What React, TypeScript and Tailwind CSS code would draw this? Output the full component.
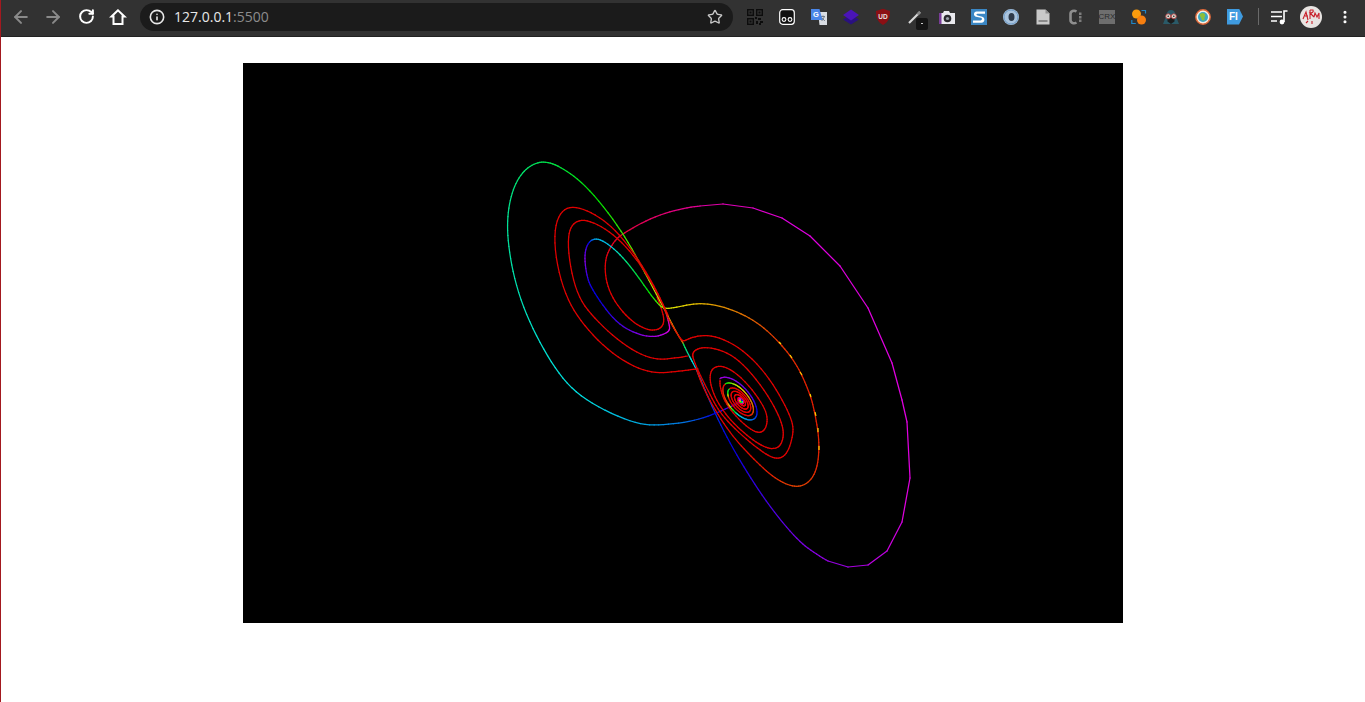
import { ArrowLeft, ArrowRight, RotateCw, Info, Star, MoreVertical } from "lucide-react";

type P = [number, number, number];

// catmull-rom so the traced points come out as a smooth line
function smooth(pts: P[], steps = 6): P[] {
  const out: P[] = [];
  for (let i = 0; i < pts.length - 1; i++) {
    const a = pts[Math.max(i - 1, 0)];
    const b = pts[i];
    const c = pts[i + 1];
    const d = pts[Math.min(i + 2, pts.length - 1)];
    for (let s = 0; s < steps; s++) {
      const t = s / steps;
      const f = (k: number) =>
        0.5 * (2 * b[k] + (c[k] - a[k]) * t + (2 * a[k] - 5 * b[k] + 4 * c[k] - d[k]) * t * t + (3 * b[k] - a[k] - 3 * c[k] + d[k]) * t * t * t);
      const h = b[2] + (c[2] - b[2]) * t;
      out.push([f(0), f(1), h]);
    }
  }
  out.push(pts[pts.length - 1]);
  // moving average to take the kinks out of the hand-read points
  return out.map((p, i) => {
    const w = Math.min(4, i, out.length - 1 - i);
    let x = 0;
    let y = 0;
    for (let k = -w; k <= w; k++) {
      x += out[i + k][0];
      y += out[i + k][1];
    }
    return [x / (2 * w + 1), y / (2 * w + 1), p[2]] as P;
  });
}

// spiral of tilted ellipses around the right-hand wing's centre
function ring(a0: number, a1: number, turns: number, c0: [number, number], c1: [number, number], hue: (f: number) => number): P[] {
  const out: P[] = [];
  const n = Math.round(72 * turns);
  const th = (50 * Math.PI) / 180;
  for (let i = 0; i <= n; i++) {
    const f = i / n;
    const t = Math.PI + f * turns * 2 * Math.PI;
    const a = a0 + (a1 - a0) * f;
    const b = a * 0.48;
    const cx = c0[0] + (c1[0] - c0[0]) * f;
    const cy = c0[1] + (c1[1] - c0[1]) * f;
    const x = cx + a * Math.cos(t) * Math.cos(th) - b * Math.sin(t) * Math.sin(th);
    const y = cy + a * Math.cos(t) * Math.sin(th) + b * Math.sin(t) * Math.cos(th);
    out.push([x, y, hue(f)]);
  }
  return out;
}

function stops(list: [number, number][]) {
  return (f: number) => {
    for (let i = 0; i < list.length - 1; i++) {
      if (f <= list[i + 1][0]) {
        const k = (f - list[i][0]) / (list[i + 1][0] - list[i][0]);
        return list[i][1] + (list[i + 1][1] - list[i][1]) * k;
      }
    }
    return list[list.length - 1][1];
  };
}

const innerToOuter: P[] = [
  [657, 297, 360], [663, 313, 360], [664, 325, 360], [655, 331, 360], [640, 327, 360], [623, 313, 360], [608, 290, 360], [605, 268, 360],
  [607, 253, 355], [617, 238, 350], [625, 233, 345], [650, 218, 335], [680, 209, 325], [700, 206, 320],
];
const outerArc: P[] = [
  [700, 206, 320], [723, 204, 315], [753, 208, 310], [782, 218, 305], [810, 236, 300], [840, 266, 300], [868, 308, 300], [892, 363, 300], [902, 400, 300],
  [907, 422, 300], [910, 478, 300], [902, 522, 300], [887, 551, 295], [868, 565, 290], [848, 567, 285], [828, 561, 280],
];
const falling: P[] = [
  [828, 561, 280], [810, 550, 275], [795, 537, 270], [770, 507, 260], [747, 472, 250], [727, 438, 240], [709, 400, 225], [697, 370, 200], [690, 358, 175], [683, 343, 140],
];
const greenLoop: P[] = [
  [683, 343, 30], [675, 330, 35], [665, 310, 58], [640, 264, 85], [623, 233, 105], [593, 193, 120], [570, 173, 130], [552, 163, 138], [540, 162, 142],
  [528, 167, 146], [517, 180, 150], [510, 200, 155], [507, 225, 160], [510, 257, 163], [520, 300, 168], [540, 343, 175], [563, 380, 178], [590, 403, 182],
  [633, 423, 192], [657, 425, 200], [690, 422, 210], [717, 413, 240], [740, 402, 280],
];
const blueLoop: P[] = [
  [665, 310, 360], [670, 327, 305], [668, 332, 295], [653, 338, 285], [633, 332, 270], [613, 320, 255], [593, 290, 240], [588, 280, 250], [584, 257, 275],
  [588, 243, 250], [596, 238, 195], [610, 245, 190], [630, 265, 150], [647, 290, 125], [660, 306, 100], [667, 309, 65], [687, 305, 55], [707, 303, 45],
  [733, 310, 35], [757, 322, 25], [777, 340, 15], [792, 358, 12], [802, 375, 10], [810, 395, 8], [813, 405, 8], [818, 430, 8], [819, 448, 10], [817, 470, 10],
  [808, 483, 15], [797, 487, 18], [783, 483, 15], [767, 472, 8], [747, 452, 3], [730, 433, 0], [712, 405, 0], [700, 380, 0], [697, 370, 0],
];
const redOuter: P[] = [
  [698, 369, 0], [687, 370, 0], [663, 373, 0], [640, 370, 0], [607, 350, 0], [580, 320, 0], [563, 290, 0], [553, 240, 0], [560, 212, 0],
  [575, 206, 0], [600, 217, 0], [623, 238, 0], [647, 273, 0], [660, 298, 0], [668, 315, 0],
];
const redInner: P[] = [
  [688, 356, 0], [667, 359, 0], [647, 358, 0], [617, 340, 0], [590, 313, 0], [575, 290, 0], [567, 243, 0], [572, 225, 0], [583, 219, 0],
  [605, 228, 0], [630, 250, 0], [650, 280, 0], [662, 302, 0], [668, 318, 10], [675, 330, 10], [682, 341, 0], [686, 340, 0],
  [700, 335, 0], [723, 338, 0], [753, 358, 0], [777, 390, 0], [792, 420, 0], [793, 433, 0], [788, 453, 0], [778, 459, 0], [767, 455, 0], [747, 440, 0],
  [723, 417, 0], [713, 400, 0], [700, 375, 0], [693, 358, 0], [693, 353, 0], [700, 347, 0], [723, 350, 0], [747, 367, 0], [773, 403, 0], [783, 427, 0],
  [783, 437, 0], [780, 447, 0], [770, 449, 0], [757, 443, 0], [737, 427, 0], [720, 407, 0], [711, 387, 0], [710, 373, 0], [717, 365, 0], [737, 372, 0],
  [760, 400, 0], [768, 417, 0], [765, 430, 0], [758, 433, 0], [747, 427, 0], [730, 410, 0], [721, 393, 0], [720, 380, 0],
];

const specks: [number, number, number, number][] = [
  [779, 342, 781, 344], [790, 355, 792, 358], [800, 372, 802, 375], [810, 394, 811, 397], [815, 412, 816, 416], [818, 428, 818, 432], [819, 446, 819, 450],
];

const curves: P[][] = [
  smooth(innerToOuter),
  outerArc,
  smooth(falling),
  smooth(greenLoop),
  smooth(blueLoop),
  smooth(redOuter),
  smooth(redInner),
  ring(28, 21, 1, [738, 400], [739, 400], stops([[0, 285], [0.3, 262], [0.55, 210], [0.68, 185], [0.8, 20], [1, 0]])),
  ring(21, 16, 1, [739, 400], [740, 401], stops([[0, 130], [0.12, 80], [0.2, 55], [0.4, 25], [0.6, 0], [0.85, 0], [0.93, 130], [1, 130]])),
  ring(16, 4, 3, [740, 401], [741, 401], () => 0),
  ring(4, 1, 2, [741, 401], [741, 401], stops([[0, 340], [0.5, 320], [1, 40]])),
];

function Attractor() {
  return (
    <svg viewBox="243 63 880 560" className="h-full w-full">
      {curves.map((c, i) =>
        c.slice(1).map((p, j) => (
          <line
            key={`${i}-${j}`}
            x1={c[j][0]}
            y1={c[j][1]}
            x2={p[0]}
            y2={p[1]}
            stroke={`hsl(${p[2]}, 100%, 44%)`}
            strokeWidth={1.25}
            strokeLinecap="round"
          />
        ))
      )}
      {specks.map((s, i) => (
        <line key={i} x1={s[0]} y1={s[1]} x2={s[2]} y2={s[3]} stroke="#ffd000" strokeWidth={1.2} />
      ))}
    </svg>
  );
}

const mono = { fontFamily: "Liberation Sans, sans-serif" };

function ExtensionIcons() {
  return [
    /* qr code */
    <svg key="qr" width="18" height="18" viewBox="0 0 18 18">
      <rect x="1" y="1" width="16" height="16" fill="#333333" />
      <g fill="none" stroke="#0c0c0c" strokeWidth="1.4">
        <rect x="1.7" y="1.7" width="5.6" height="5.6" />
        <rect x="10.7" y="1.7" width="5.6" height="5.6" />
        <rect x="1.7" y="10.7" width="5.6" height="5.6" />
      </g>
      <path d="M3.5 3.5h2v2h-2zM12.5 3.500h2v2h-2zM3.500 12.500h2v2h-2zM9 9h2v2H9zM12 10h3v2h-3zM10 13h2v3h-2zM14 13h3v2h-3zM13 15h2v2h-2z" fill="#0c0c0c" />
    </svg>,
    /* tampermonkey */
    <svg key="tm" width="16" height="16" viewBox="0 0 16 16">
      <rect x="0.7" y="0.7" width="14.600" height="14.600" rx="3" fill="#111" stroke="#fff" strokeWidth="1.2" />
      <circle cx="5" cy="10.500" r="1.900" fill="none" stroke="#fff" strokeWidth="1.100" />
      <circle cx="11" cy="10.500" r="1.900" fill="none" stroke="#fff" strokeWidth="1.100" />
    </svg>,
    /* translate */
    <svg key="tr" width="18" height="18" viewBox="0 0 18 18">
      <path d="M8 4h9v13H9.500z" fill="#d9dde3" />
      <path d="M11 8.500h4M13 7.500v1M11.700 13l2.600-4M11.800 9.600l3 3.400" stroke="#6b7480" strokeWidth="0.900" fill="none" />
      <path d="M1 1h8.500l3 11H1z" fill="#4a86e8" />
      <text x="2.900" y="9.200" fontSize="7.500" fontWeight="700" fill="#fff" style={mono}>G</text>
    </svg>,
    /* layers */
    <svg key="la" width="16" height="16" viewBox="0 0 16 16">
      <path d="M8 5.500l8 5-8 5-8-5z" fill="#2a1180" />
      <path d="M8 .5l8 5.500-8 5.500L0 6z" fill="#4a14b8" />
    </svg>,
    /* ublock */
    <svg key="ub" width="16" height="18" viewBox="0 0 16 18">
      <path d="M8 .8l7 2.200c0 6.500-1.500 11-7 14C2.500 14 1 9.500 1 3z" fill="#8b0f14" />
      <text x="3.300" y="10.500" fontSize="6.500" fontWeight="700" fill="#e8e0e0" style={mono}>UD</text>
    </svg>,
    /* pen with badge */
    <div key="pen" className="relative h-4 w-4">
      <svg width="16" height="16" viewBox="0 0 16 16">
        <path d="M2 14L13 3" stroke="#d8d8d8" strokeWidth="2.200" />
        <path d="M10.500 5.500L13 3" stroke="#8a8a8a" strokeWidth="2.600" />
      </svg>
      <div className="absolute left-[9px] top-[9px] flex h-3 w-3 items-center justify-center rounded-[2px] bg-[#151515]">
        <div className="h-px w-[2px] bg-[#cccccc]" />
      </div>
    </div>,
    /* camera */
    <svg key="cam" width="16" height="16" viewBox="0 0 16 16">
      <path d="M0 4h4l1-2h5l1 2h5v11H0z" fill="#e9e9ee" />
      <rect x="0" y="4" width="2.500" height="11" fill="#7a3d98" />
      <circle cx="8.500" cy="9.500" r="3.800" fill="#2a2a2e" />
      <circle cx="8.500" cy="9.500" r="1.600" fill="#9aa0a8" />
    </svg>,
    /* s logo */
    <svg key="s" width="16" height="16" viewBox="0 0 16 16">
      <rect width="16" height="16" fill="#3b87c4" />
      <path d="M14 2.500H5.500C2.500 2.500 2 6.800 5 7.800l5 1c1.500.4 1.200 2.600-.5 2.600H2v2.400h8.500c3.500 0 4-5 .7-6L6.500 6.600C5 6.200 5.200 4.800 6.500 4.800H14z" fill="#fff" />
    </svg>,
    /* ring */
    <svg key="ring" width="16" height="16" viewBox="0 0 16 16">
      <circle cx="8" cy="8" r="8" fill="#a9c3dd" />
      <circle cx="8" cy="8" r="7" fill="none" stroke="#6f9bc7" strokeWidth="1" />
      <ellipse cx="8.500" cy="8" rx="3" ry="4" fill="#2e3a4a" />
    </svg>,
    /* page */
    <svg key="page" width="14" height="16" viewBox="0 0 14 16">
      <path d="M0.500 0.500h9l4 4v11h-13z" fill="#c9c9c9" />
      <path d="M9.500 0.500v4h4z" fill="#8f8f8f" />
      <rect x="2.500" y="11" width="9" height="2" fill="#8a8a8a" />
    </svg>,
    /* c: */
    <svg key="c" width="16" height="16" viewBox="0 0 16 16">
      <path d="M9.500 2.500C7 1 3.500 2 3.500 5v6c0 3 3.500 4 6 2.500" fill="none" stroke="#8e8e8e" strokeWidth="2.600" />
      <path d="M12 3.500h2.500v2.500H12zM12 7h2.500v2.500H12zM12 10.500h2.500V13H12z" fill="#7d7d7d" />
    </svg>,
    /* crx */
    <div key="crx" className="flex h-[14px] w-4 items-center justify-center bg-[#6e6e6e] text-[8px] leading-none text-[#2c2c2c]" style={mono}>
      CRX
    </div>,
    /* orange swap */
    <svg key="sw" width="16" height="16" viewBox="0 0 16 16">
      <circle cx="5.500" cy="5" r="4.500" fill="#fb9c0d" />
      <circle cx="10.500" cy="11" r="4.500" fill="#f77f10" />
      <path d="M10.500 1.500h4v3M0.800 11v3.500h4" fill="none" stroke="#1f87c9" strokeWidth="1.200" />
    </svg>,
    /* hacker */
    <svg key="hk" width="16" height="16" viewBox="0 0 16 16">
      <path d="M8 1C4 1 3 6 2 10l-2 5h16l-2-5C13 6 12 1 8 1z" fill="#2a5a68" />
      <path d="M4.500 9h7v3.500L8 15l-3.500-2.500z" fill="#1d1d1d" />
      <circle cx="5.200" cy="7.300" r="2.500" fill="#d8d8d0" stroke="#b83434" strokeWidth="0.800" />
      <circle cx="10.800" cy="7.300" r="2.500" fill="#d8d8d0" stroke="#b83434" strokeWidth="0.800" />
      <circle cx="5.200" cy="7.300" r="0.800" fill="#222" />
      <circle cx="10.800" cy="7.300" r="0.800" fill="#222" />
    </svg>,
    /* globe */
    <svg key="gl" width="16" height="16" viewBox="0 0 16 16">
      <circle cx="8" cy="8" r="7.200" fill="#f3efe4" stroke="#e0693a" strokeWidth="1.400" />
      <circle cx="8" cy="8" r="5" fill="#3aa6c4" />
      <path d="M5 5c2-1.500 4-1 5 .5S9 8 9.500 10 7 12 6.500 10 4 7 5 5z" fill="#8bbf3c" />
    </svg>,
    /* fi tag */
    <div key="fi" className="flex h-4 w-4 items-center bg-[#3f9be0] pl-[2px] text-[10px] font-bold leading-none text-white [clip-path:polygon(0_0,75%_0,100%_50%,75%_100%,0_100%)]" style={mono}>
      FI
    </div>,
  ];
}

function Avatar() {
  return (
    <svg width="22" height="22" viewBox="0 0 22 22">
      <circle cx="11" cy="11" r="11" fill="#e8e4e2" />
      <path d="M3 13l3-7 2 8M5 10h3M10 4v9M10 4h3c1 2-1 3-3 3l4 4M14 11l1-4 2 4 2-4v6M6 17l2-2M12 15v3" fill="none" stroke="#c8202a" strokeWidth="1.100" />
    </svg>
  );
}

export default function App() {
  return (
    <div className="flex h-screen flex-col overflow-hidden border-l border-[#a3191f] bg-white">
      <header className="flex h-[37px] shrink-0 items-center border-b border-[#222222] bg-[#323232] pb-[3px] pl-[4px] pr-[12px]">
        <div className="flex h-8 w-8 items-center justify-center text-[#8a8a8a]">
          <ArrowLeft size={20} strokeWidth={2.4} />
        </div>
        <div className="flex h-8 w-8 items-center justify-center text-[#8a8a8a]">
          <ArrowRight size={20} strokeWidth={2.4} />
        </div>
        <div className="ml-px flex h-8 w-8 items-center justify-center text-white">
          <RotateCw size={17} strokeWidth={2.8} />
        </div>
        <div className="flex h-8 w-8 items-center justify-center">
          <svg width="18" height="18" viewBox="0 0 18 18">
            <path d="M9 2.300L2.500 8.500H4.500V16H13.500V8.500H15.500z" fill="none" stroke="#fff" strokeWidth="2" />
          </svg>
        </div>
        <div className="ml-[6px] flex h-[28px] flex-1 items-center rounded-full bg-[#1b1b1b] pl-[9px] pr-[10px]">
          <Info size={16} className="text-[#e8e8e8]" strokeWidth={2.4} />
          <span className="ml-[9px] text-[14px] text-[#e8e8e8] [font-family:'Open_Sans',sans-serif]">
            127.0.0.1<span className="text-[#8c8c8c]">:5500</span>
          </span>
          <Star size={16} className="ml-auto text-[#c8c8c8]" strokeWidth={2} />
        </div>
        <div className="ml-[6px] flex items-center">
          {ExtensionIcons().map((icon, i) => (
            <div key={i} className="flex h-8 w-8 items-center justify-center">
              {icon}
            </div>
          ))}
        </div>
        <div className="ml-[7px] h-[17px] w-px bg-[#6a6a6a]" />
        <div className="ml-[4px] flex h-8 w-8 items-center justify-center">
          <svg width="18" height="16" viewBox="0 0 18 16">
            <path d="M1 3h11M1 7.500h11M1 12h6" stroke="#fff" strokeWidth="1.600" />
            <path d="M14 13V2h3.500" fill="none" stroke="#fff" strokeWidth="1.600" />
            <circle cx="12" cy="13" r="2.400" fill="#fff" />
          </svg>
        </div>
        <div className="flex h-8 w-8 items-center justify-center">
          <Avatar />
        </div>
        <div className="ml-[10px] flex h-8 w-4 items-center justify-center text-white">
          <MoreVertical size={18} strokeWidth={2.6} />
        </div>
      </header>
      <main className="flex justify-center pt-[26px]">
        <div className="h-[560px] w-[880px] bg-black">
          <Attractor />
        </div>
      </main>
    </div>
  );
}
